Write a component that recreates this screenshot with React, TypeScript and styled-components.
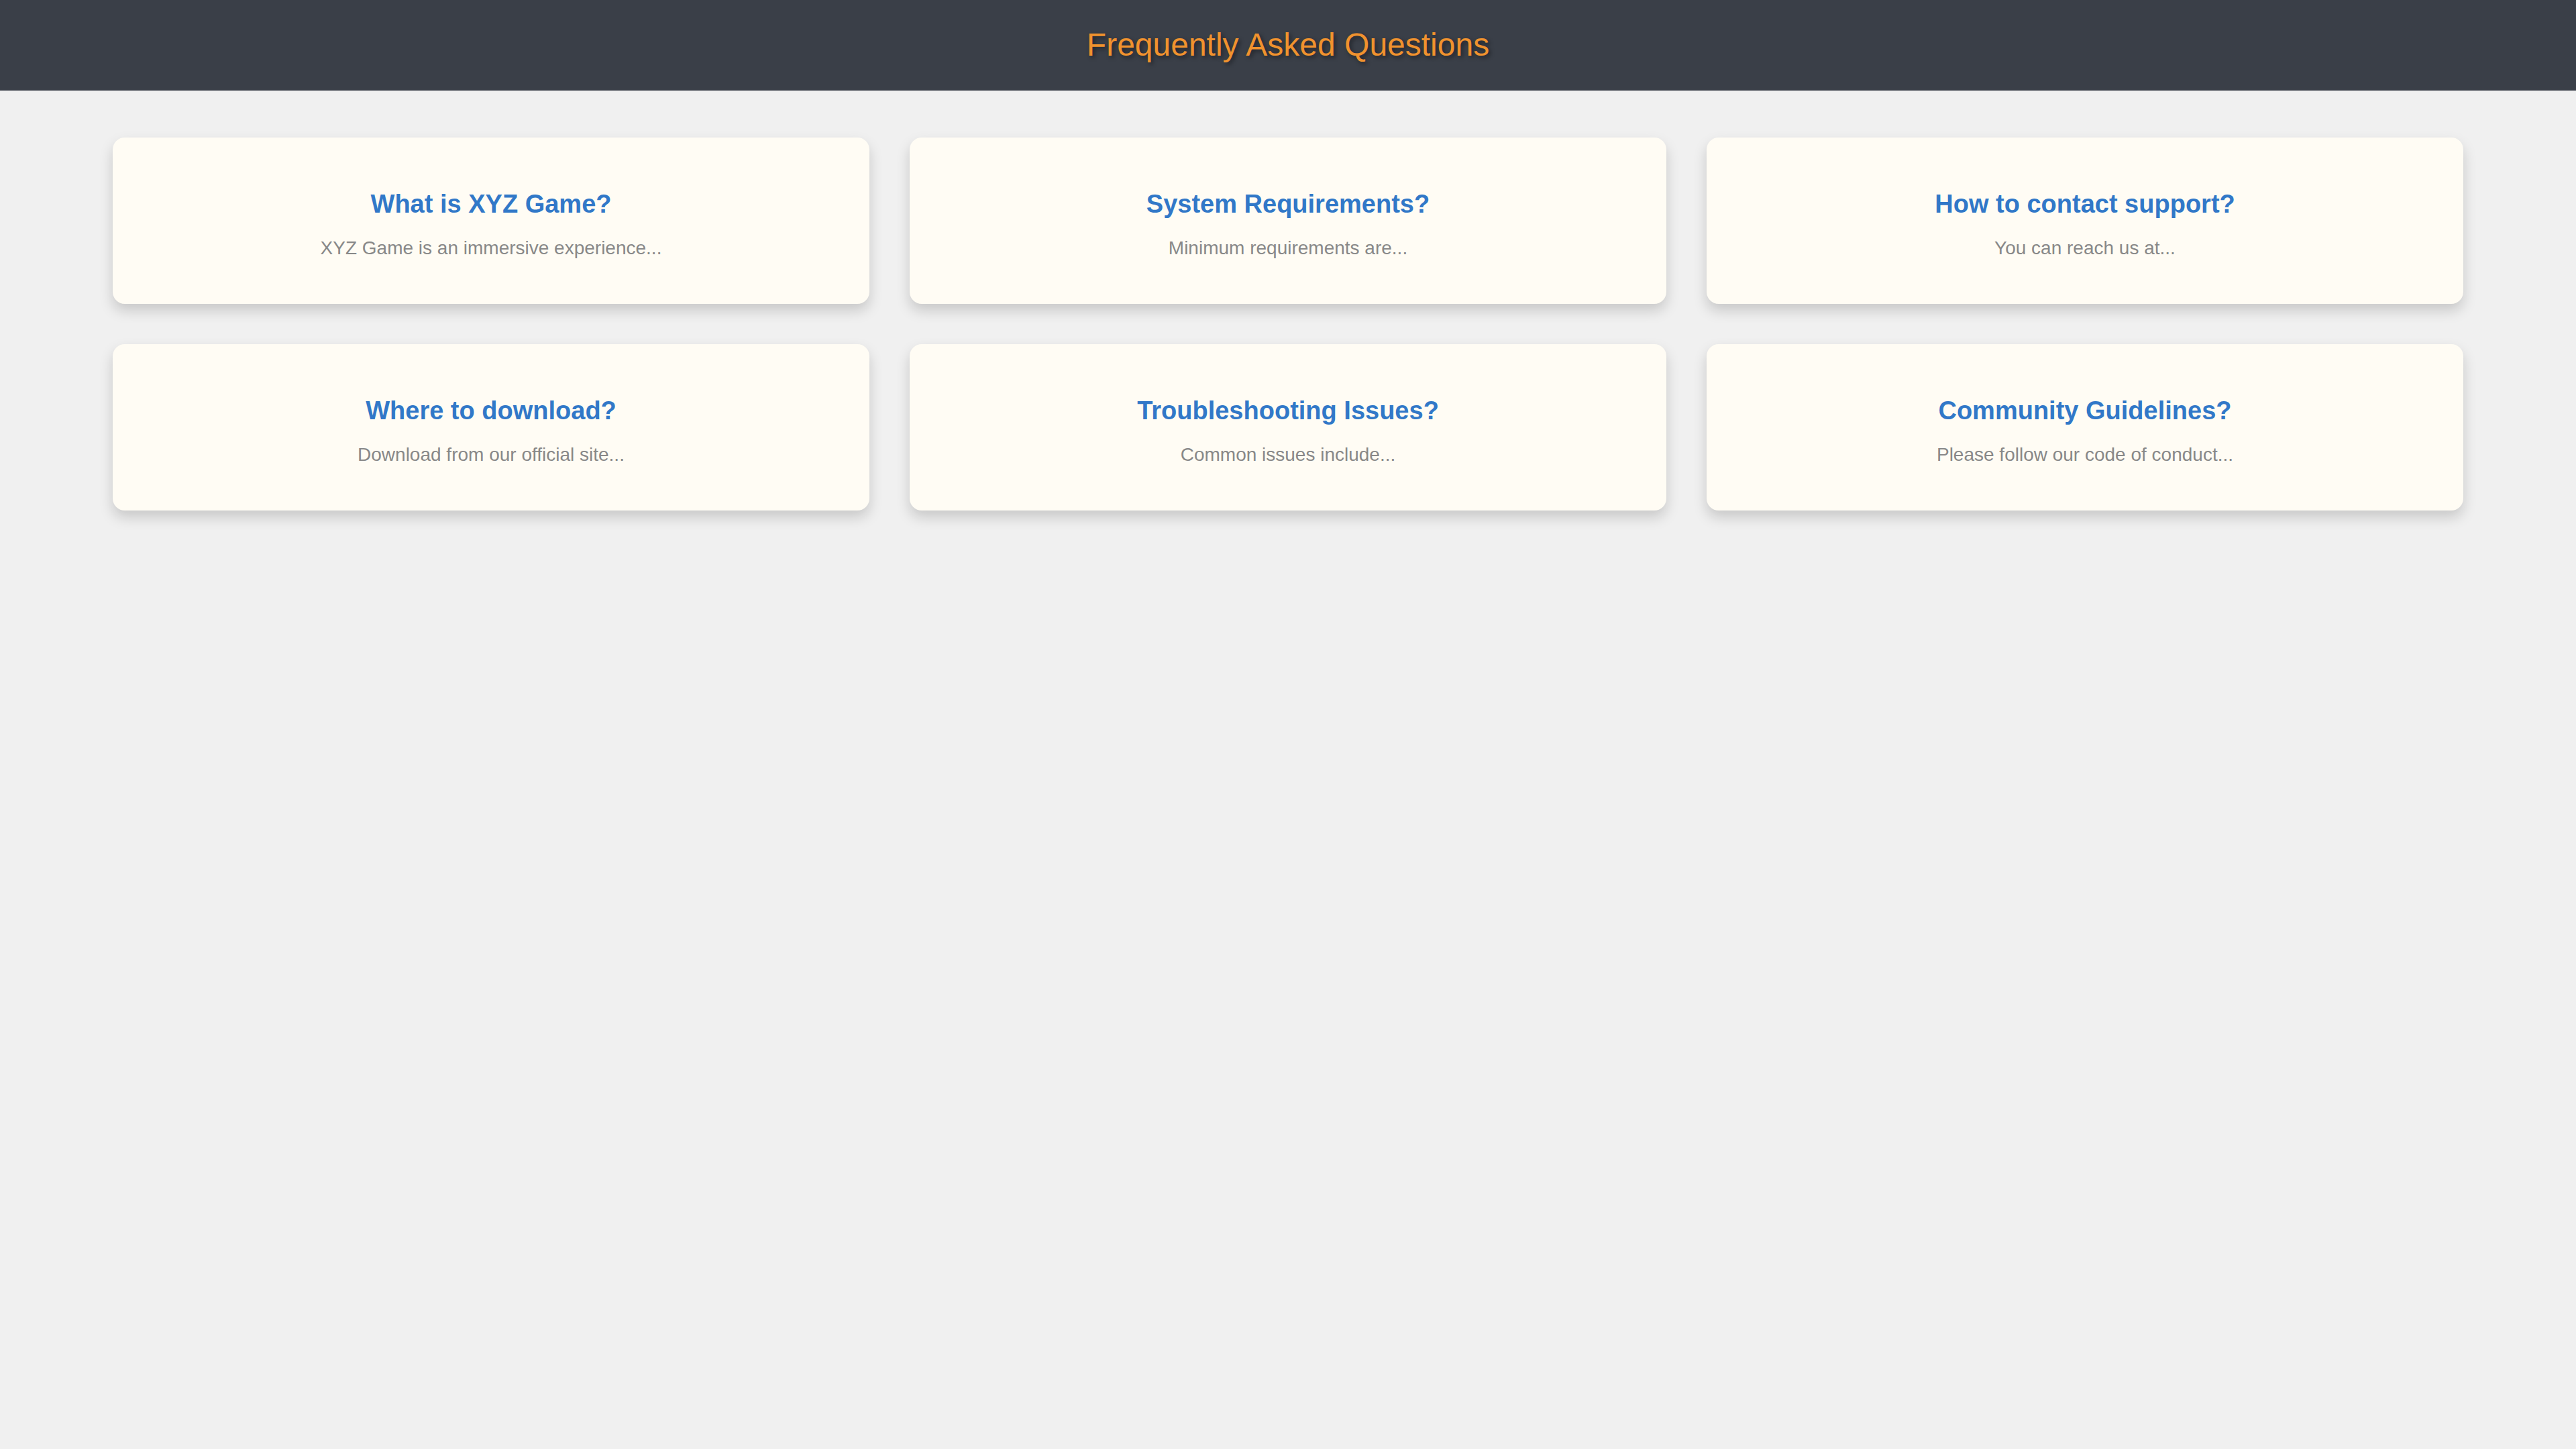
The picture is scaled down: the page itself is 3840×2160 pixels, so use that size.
import React from "react";
import styled, { createGlobalStyle } from "styled-components";

const GlobalStyle = createGlobalStyle`
  html, body {
    margin: 0;
    padding: 0;
    background: #f0f0f0;
    font-family: "Liberation Sans", Arial, Helvetica, sans-serif;
  }
  body {
    min-height: 2160px;
  }
`;

const Page = styled.div`
  min-height: 2160px;
  background: #f0f0f0;
`;

const Header = styled.header`
  background: #3a3f48;
  padding: 40px 0 41px;
  text-align: center;
`;

const Title = styled.h1`
  margin: 0;
  font-size: 48px;
  line-height: 54px;
  font-weight: 400;
  color: #f0922e;
  text-shadow: 3px 3px 6px rgba(0, 0, 0, 0.45);
`;

const Grid = styled.main`
  display: grid;
  grid-template-columns: repeat(3, 1fr);
  gap: 60px;
  padding: 70px 168px;
`;

const Card = styled.section`
  background: #fffcf4;
  border-radius: 18px;
  box-shadow: 0 10px 20px rgba(0, 0, 0, 0.17);
  padding: 77px 40px 67px;
  text-align: center;
`;

const Question = styled.h2`
  margin: 0;
  font-size: 38px;
  line-height: 44px;
  font-weight: 700;
  color: #3178c8;
`;

const Answer = styled.p`
  margin: 28px 0 0;
  font-size: 28px;
  line-height: 32px;
  color: #888888;
`;

const faqs = [
  { q: "What is XYZ Game?", a: "XYZ Game is an immersive experience..." },
  { q: "System Requirements?", a: "Minimum requirements are..." },
  { q: "How to contact support?", a: "You can reach us at..." },
  { q: "Where to download?", a: "Download from our official site..." },
  { q: "Troubleshooting Issues?", a: "Common issues include..." },
  { q: "Community Guidelines?", a: "Please follow our code of conduct..." },
];

export default function App() {
  return (
    <Page>
      <GlobalStyle />
      <Header>
        <Title>Frequently Asked Questions</Title>
      </Header>
      <Grid>
        {faqs.map((f) => (
          <Card key={f.q}>
            <Question>{f.q}</Question>
            <Answer>{f.a}</Answer>
          </Card>
        ))}
      </Grid>
    </Page>
  );
}
